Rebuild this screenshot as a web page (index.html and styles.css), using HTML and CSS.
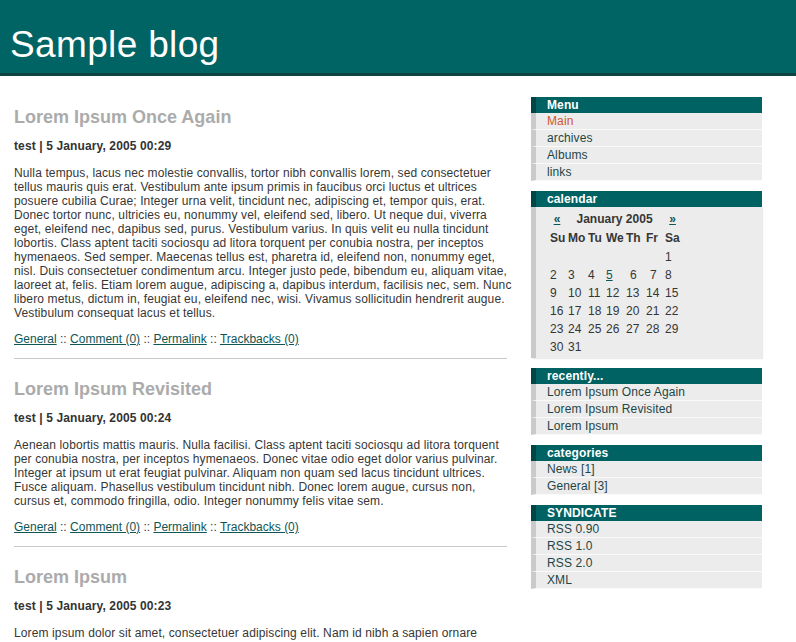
FILE: index.html
```html
<!DOCTYPE html>
<html>
<head>
<meta charset="utf-8">
<title>Sample blog</title>
<link rel="stylesheet" href="styles.css">
</head>
<body>
<header class="masthead">
  <h1 class="site-title">Sample blog</h1>
</header>
<div class="page">
  <main class="content">
    <article class="post">
      <h2 class="post-title">Lorem Ipsum Once Again</h2>
      <div class="post-meta">test | 5 January, 2005 00:29</div>
      <p class="post-body">Nulla tempus, lacus nec molestie convallis, tortor nibh convallis lorem, sed consectetuer tellus mauris quis erat. Vestibulum ante ipsum primis in faucibus orci luctus et ultrices posuere cubilia Curae; Integer urna velit, tincidunt nec, adipiscing et, tempor quis, erat. Donec tortor nunc, ultricies eu, nonummy vel, eleifend sed, libero. Ut neque dui, viverra eget, eleifend nec, dapibus sed, purus. Vestibulum varius. In quis velit eu nulla tincidunt lobortis. Class aptent taciti sociosqu ad litora torquent per conubia nostra, per inceptos hymenaeos. Sed semper. Maecenas tellus est, pharetra id, eleifend non, nonummy eget, nisl. Duis consectetuer condimentum arcu. Integer justo pede, bibendum eu, aliquam vitae, laoreet at, felis. Etiam lorem augue, adipiscing a, dapibus interdum, facilisis nec, sem. Nunc libero metus, dictum in, feugiat eu, eleifend nec, wisi. Vivamus sollicitudin hendrerit augue. Vestibulum consequat lacus et tellus.</p>
      <div class="post-links"><a href="#">General</a> :: <a href="#">Comment (0)</a> :: <a href="#">Permalink</a> :: <a href="#">Trackbacks (0)</a></div>
    </article>
    <hr class="sep">
    <article class="post">
      <h2 class="post-title">Lorem Ipsum Revisited</h2>
      <div class="post-meta">test | 5 January, 2005 00:24</div>
      <p class="post-body">Aenean lobortis mattis mauris. Nulla facilisi. Class aptent taciti sociosqu ad litora torquent per conubia nostra, per inceptos hymenaeos. Donec vitae odio eget dolor varius pulvinar. Integer at ipsum ut erat feugiat pulvinar. Aliquam non quam sed lacus tincidunt ultrices. Fusce aliquam. Phasellus vestibulum tincidunt nibh. Donec lorem augue, cursus non, cursus et, commodo fringilla, odio. Integer nonummy felis vitae sem.</p>
      <div class="post-links"><a href="#">General</a> :: <a href="#">Comment (0)</a> :: <a href="#">Permalink</a> :: <a href="#">Trackbacks (0)</a></div>
    </article>
    <hr class="sep">
    <article class="post">
      <h2 class="post-title">Lorem Ipsum</h2>
      <div class="post-meta">test | 5 January, 2005 00:23</div>
      <p class="post-body">Lorem ipsum dolor sit amet, consectetuer adipiscing elit. Nam id nibh a sapien ornare</p>
    </article>
  </main>
  <aside class="sidebar">
    <section class="box">
      <h3 class="box-title">Menu</h3>
      <ul class="box-list">
        <li><a class="current" href="#">Main</a></li>
        <li><a href="#">archives</a></li>
        <li><a href="#">Albums</a></li>
        <li><a href="#">links</a></li>
      </ul>
    </section>
    <section class="box">
      <h3 class="box-title">calendar</h3>
      <div class="cal-body">
        <table class="cal">
          <colgroup>
            <col class="c-su"><col class="c-mo"><col class="c-tu"><col class="c-we"><col class="c-th"><col class="c-fr"><col class="c-sa">
          </colgroup>
          <tr class="cal-month"><th><a href="#">«</a></th><th colspan="5">January 2005</th><th><a href="#">»</a></th></tr>
          <tr class="cal-days"><th>Su</th><th>Mo</th><th>Tu</th><th>We</th><th>Th</th><th>Fr</th><th>Sa</th></tr>
          <tr><td></td><td></td><td></td><td></td><td></td><td></td><td>1</td></tr>
          <tr><td>2</td><td>3</td><td>4</td><td><a href="#">5</a></td><td class="shift">6</td><td class="shift">7</td><td>8</td></tr>
          <tr><td>9</td><td>10</td><td>11</td><td>12</td><td>13</td><td>14</td><td>15</td></tr>
          <tr><td>16</td><td>17</td><td>18</td><td>19</td><td>20</td><td>21</td><td>22</td></tr>
          <tr><td>23</td><td>24</td><td>25</td><td>26</td><td>27</td><td>28</td><td>29</td></tr>
          <tr><td>30</td><td>31</td><td></td><td></td><td></td><td></td><td></td></tr>
        </table>
      </div>
    </section>
    <section class="box">
      <h3 class="box-title">recently...</h3>
      <ul class="box-list">
        <li><a href="#">Lorem Ipsum Once Again</a></li>
        <li><a href="#">Lorem Ipsum Revisited</a></li>
        <li><a href="#">Lorem Ipsum</a></li>
      </ul>
    </section>
    <section class="box">
      <h3 class="box-title">categories</h3>
      <ul class="box-list">
        <li><a href="#">News [1]</a></li>
        <li><a href="#">General [3]</a></li>
      </ul>
    </section>
    <section class="box">
      <h3 class="box-title">SYNDICATE</h3>
      <ul class="box-list">
        <li><a href="#">RSS 0.90</a></li>
        <li><a href="#">RSS 1.0</a></li>
        <li><a href="#">RSS 2.0</a></li>
        <li><a href="#">XML</a></li>
      </ul>
    </section>
  </aside>
</div>
</body>
</html>
```
FILE: styles.css
```css
html, body {
  margin: 0;
  padding: 0;
  background: #ffffff;
}
body {
  font-family: "Liberation Sans", Arial, Helvetica, sans-serif;
  font-size: 12px;
  letter-spacing: 0.12px;
  color: #363636;
  overflow: hidden;
}
.masthead {
  background: #006464;
  border-bottom: 3px solid #0e4343;
  padding: 25px 10px 0;
  height: 48px;
}
.site-title {
  margin: 0;
  font-size: 37px;
  line-height: 40px;
  letter-spacing: 0.35px;
  font-weight: normal;
  color: #ffffff;
}
.page {
  display: flex;
  gap: 17px;
  padding: 0 14px;
  align-items: flex-start;
}
.content {
  width: 500px;
  flex: none;
  padding-top: 31px;
}
.post-title {
  margin: 0 0 11px;
  font-size: 18px;
  line-height: 21px;
  letter-spacing: 0;
  font-weight: bold;
  color: #ababab;
}
.post-meta {
  font-weight: bold;
  line-height: 14px;
  color: #333333;
  margin-bottom: 13px;
}
.post-body {
  margin: 0 0 12px;
  line-height: 14px;
}
.post-links {
  line-height: 14px;
  letter-spacing: 0;
}
.post-links a {
  color: #0f5555;
  text-decoration: underline;
}
.sep {
  border: 0;
  border-top: 1px solid #c9c9c9;
  margin: 12px 7px 20px 0;
  height: 0;
}
.sidebar {
  width: 231px;
  flex: none;
  margin-top: 21px;
}
.box {
  margin-bottom: 10px;
}
.box-title {
  margin: 0;
  background: #006262;
  border-left: 5px solid #024545;
  padding-left: 11px;
  color: #ffffff;
  font-size: 12px;
  line-height: 16px;
  font-weight: bold;
}
.box-list {
  list-style: none;
  margin: 0;
  padding: 0;
}
.box-list li {
  background: #ececec;
  border-left: 5px solid #cacaca;
  border-bottom: 1px solid #fafafa;
  padding-left: 11px;
  line-height: 16px;
}
.box-list a {
  color: #1e4646;
  text-decoration: none;
}
.box-list a.current {
  color: #d0592a;
}
.cal-body {
  background: #ececec;
  border-left: 5px solid #cacaca;
  padding: 2px 0 1px 11px;
  box-shadow: 1px 1px 1px rgba(0, 0, 0, 0.08);
}
.cal {
  table-layout: fixed;
  width: 136px;
  border-spacing: 2px;
  font-size: 12px;
  letter-spacing: 0;
  color: #363636;
}
.cal .c-su { width: 16px; }
.cal .c-mo { width: 18px; }
.cal .c-tu { width: 16px; }
.cal .c-we { width: 18px; }
.cal .c-th { width: 18px; }
.cal .c-fr { width: 17px; }
.cal .c-sa { width: 17px; }
.cal td, .cal th {
  padding: 1px;
  line-height: 14px;
  text-align: left;
  white-space: nowrap;
  overflow: visible;
}
.cal th {
  font-weight: bold;
  padding-bottom: 2px;
}
.cal-month th {
  text-align: center;
}
.cal td.shift {
  padding-left: 5px;
}
.cal a {
  color: #0f5555;
  text-decoration: underline;
}
```
